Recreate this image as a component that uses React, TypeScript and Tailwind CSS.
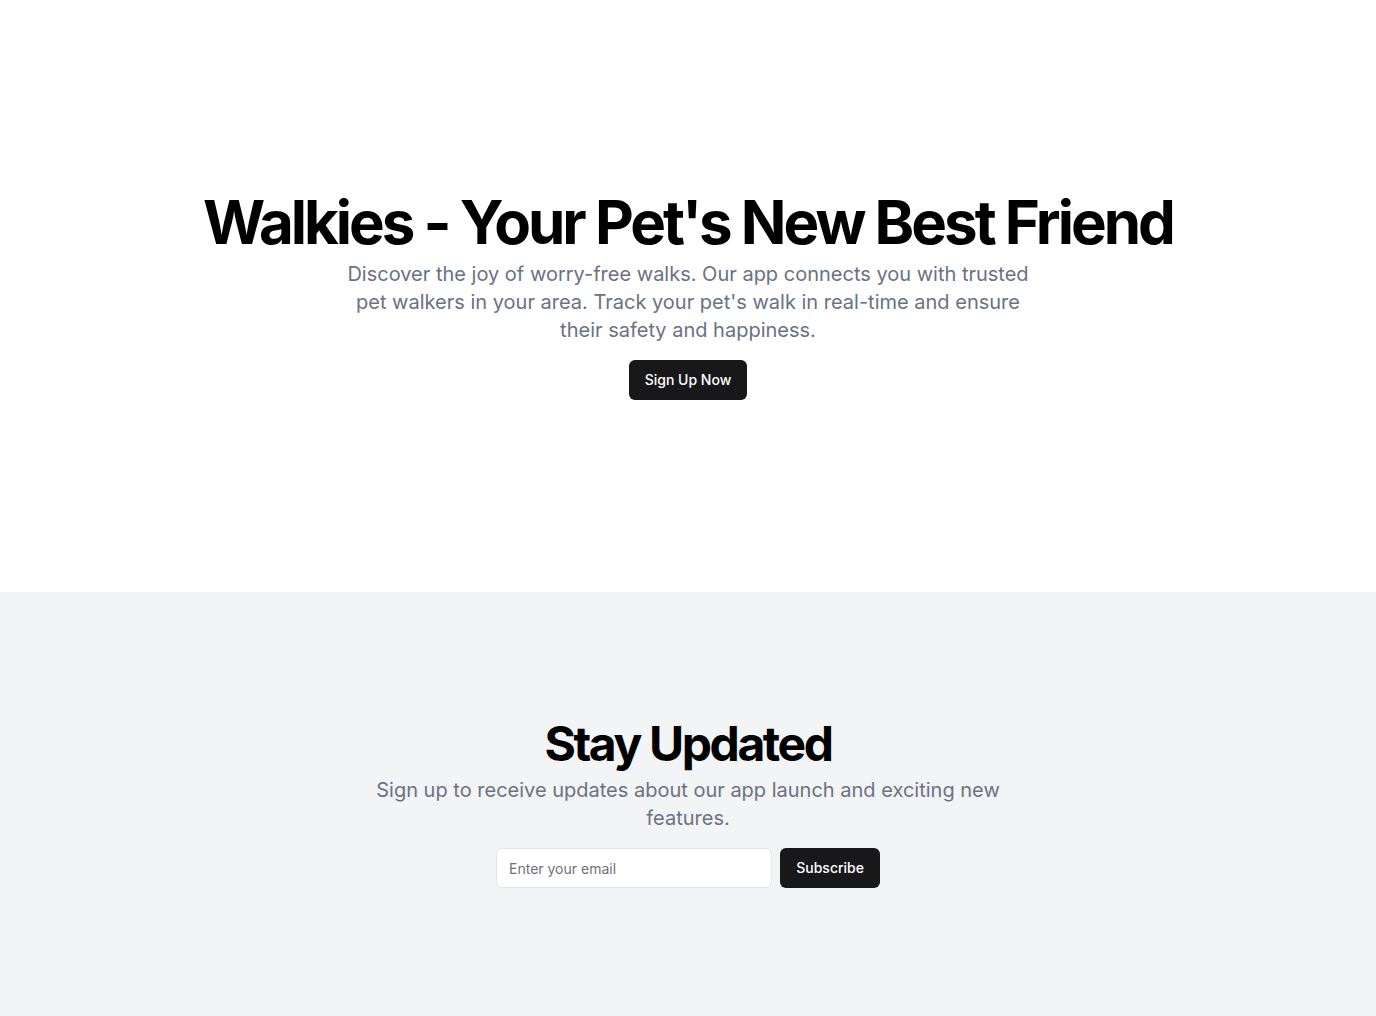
export default function App() {
  return (
    <div className="flex min-h-screen flex-col bg-white font-['Inter',sans-serif]">
      <main className="flex-1">
        {/* Hero */}
        <section className="w-full py-48">
          <div className="mx-auto px-6">
            <div className="flex flex-col items-center space-y-4 text-center">
              <div className="space-y-2">
                <h1 className="text-6xl/none font-bold tracking-tighter text-black">
                  Walkies - Your Pet's New Best Friend
                </h1>
                <p className="mx-auto max-w-[700px] text-xl text-gray-500">
                  Discover the joy of worry-free walks. Our app connects you with trusted pet walkers in your area.
                  Track your pet's walk in real-time and ensure their safety and happiness.
                </p>
              </div>
              <button className="inline-flex h-10 items-center justify-center rounded-md bg-[#18181b] px-4 py-2 text-sm font-medium text-white">
                Sign Up Now
              </button>
            </div>
          </div>
        </section>

        {/* Newsletter */}
        <section className="w-full bg-gray-100 py-32">
          <div className="mx-auto px-6">
            <div className="flex flex-col items-center space-y-4 text-center">
              <div className="space-y-2">
                <h2 className="text-5xl/none font-bold tracking-tighter text-black">Stay Updated</h2>
                <p className="mx-auto max-w-[700px] text-xl text-gray-500">
                  Sign up to receive updates about our app launch and exciting new features.
                </p>
              </div>
              <div className="w-full max-w-sm space-y-2">
                <form className="flex space-x-2">
                  <input
                    type="email"
                    placeholder="Enter your email"
                    className="flex h-10 w-full max-w-lg flex-1 rounded-md border border-[#e4e4e7] bg-white px-3 py-2 text-sm placeholder:text-[#71717a] focus:outline-none"
                  />
                  <button
                    type="submit"
                    className="inline-flex h-10 items-center justify-center rounded-md bg-[#18181b] px-4 py-2 text-sm font-medium text-white"
                  >
                    Subscribe
                  </button>
                </form>
              </div>
            </div>
          </div>
        </section>
      </main>
    </div>
  );
}
